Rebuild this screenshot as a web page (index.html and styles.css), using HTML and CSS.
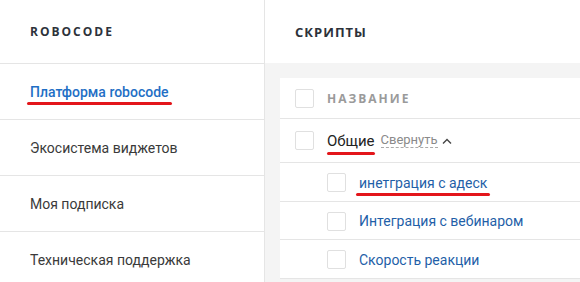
FILE: index.html
```html
<!DOCTYPE html>
<html lang="ru">
<head>
    <meta charset="UTF-8">
    <title>Скрипты</title>
    <link rel="stylesheet" href="styles.css">
</head>
<body>
    <div class="layout">
        <aside class="sidebar">
            <div class="sidebar-head">ROBOCODE</div>
            <a class="nav-item active"><span class="mark">Платформа robocode</span></a>
            <a class="nav-item">Экосистема виджетов</a>
            <a class="nav-item">Моя подписка</a>
            <a class="nav-item">Техническая поддержка</a>
        </aside>
        <main class="content">
            <div class="content-head">СКРИПТЫ</div>
            <div class="content-body">
                <div class="card">
                    <div class="row row-head">
                        <span class="check"></span>
                        <span class="col-title">НАЗВАНИЕ</span>
                    </div>
                    <div class="row row-group">
                        <span class="check"></span>
                        <span class="mark mark-tight">Общие</span>
                        <span class="collapse">Свернуть</span>
                        <svg class="chevron" width="10" height="6" viewBox="0 0 10 6"><path d="M1 5.5 5 1.5 9 5.5" fill="none" stroke="#444" stroke-width="1.4"/></svg>
                    </div>
                    <div class="row row-sub">
                        <span class="check"></span>
                        <a class="script-link mark">инетграция с адеск</a>
                    </div>
                    <div class="row row-sub">
                        <span class="check"></span>
                        <a class="script-link">Интеграция с вебинаром</a>
                    </div>
                    <div class="row row-sub">
                        <span class="check"></span>
                        <a class="script-link">Скорость реакции</a>
                    </div>
                </div>
            </div>
        </main>
    </div>
</body>
</html>
```
FILE: styles.css
```css
body {
    margin: 0;
    font-family: Roboto, "Liberation Sans", sans-serif;
    color: #333;
    background: #fff;
}
.layout {
    display: flex;
    height: 282px;
    overflow: hidden;
}
.sidebar {
    width: 264px;
    border-right: 1px solid #e5e5e5;
    flex-shrink: 0;
}
.sidebar-head, .content-head {
    height: 64px;
    display: flex;
    align-items: center;
    font-family: "Open Sans", sans-serif;
    font-size: 12px;
    font-weight: 700;
    color: #2d323a;
    box-sizing: border-box;
}
.sidebar-head {
    padding-left: 30px;
    letter-spacing: 2px;
    border-bottom: 1px solid #e5e5e5;
}
.nav-item {
    display: flex;
    align-items: center;
    height: 56px;
    padding-left: 30px;
    font-size: 14px;
    border-bottom: 1px solid #e5e5e5;
    box-sizing: border-box;
    color: #3a3a3a;
}
.nav-item.active {
    color: #1f6fc5;
    font-weight: 500;
}
.mark {
    position: relative;
}
.mark::after {
    content: "";
    position: absolute;
    left: -3px;
    right: -3px;
    bottom: -5px;
    height: 3px;
    border-radius: 2px;
    background: #e3161b;
}
.mark-tight::after {
    left: 0;
    right: 0;
}
.content {
    flex: 1;
    min-width: 0;
}
.content-head {
    padding-left: 30px;
    letter-spacing: 1px;
    font-size: 13px;
    height: 63px;
}
.content-body {
    background: #f4f4f4;
    padding: 15px 0 0 15px;
    height: 219px;
    box-sizing: border-box;
}
.card {
    background: #fff;
}
.row {
    display: flex;
    align-items: center;
    border-bottom: 1px solid #e5e5e5;
    padding-left: 15px;
    box-sizing: border-box;
}
.check {
    width: 17px;
    height: 17px;
    border: 1px solid #e0e0e0;
    border-radius: 2px;
    flex-shrink: 0;
    margin-right: 13px;
}
.row-head {
    height: 41px;
}
.col-title {
    font-family: "Open Sans", sans-serif;
    font-size: 12px;
    font-weight: 700;
    letter-spacing: 2px;
    color: #9a9a9a;
}
.row-group {
    height: 44px;
    font-size: 15px;
    color: #222;
}
.collapse {
    margin-left: 6px;
    font-size: 13px;
    color: #8a8a8a;
    border-bottom: 1px dashed #aaa;
    line-height: 14px;
}
.chevron {
    margin-left: 4px;
}
.row-sub {
    height: 38.5px;
    padding-left: 47px;
    padding-top: 2px;
}
.script-link {
    font-size: 14px;
    color: #1f5fa8;
}
```
